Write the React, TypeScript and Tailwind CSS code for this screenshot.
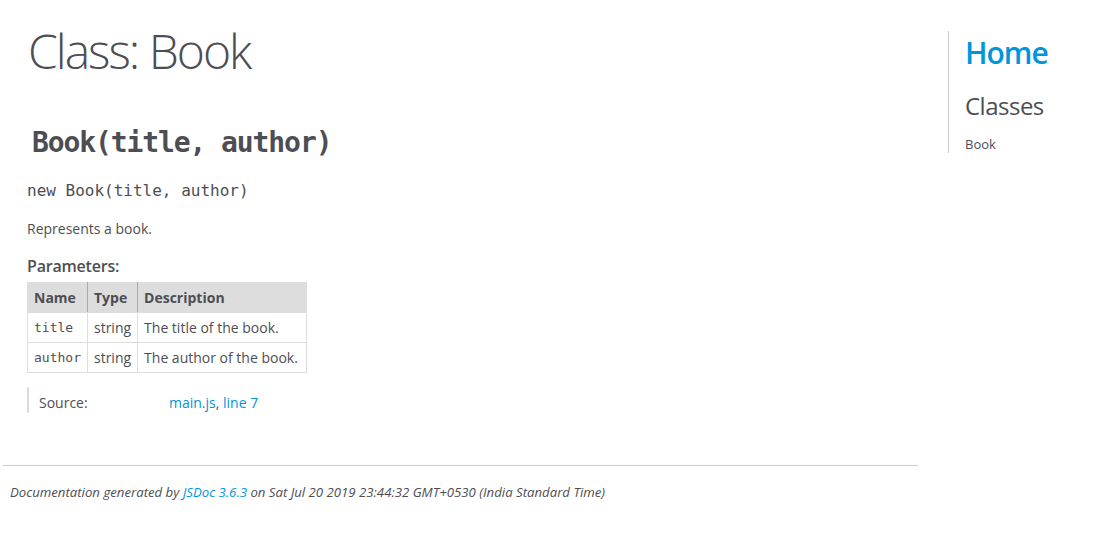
const mono = "font-['DejaVu_Sans_Mono',Consolas,monospace]";

const params = [
  { name: 'title', type: 'string', description: 'The title of the book.' },
  { name: 'author', type: 'string', description: 'The author of the book.' },
];

export default function App() {
  return (
    <div className="flex min-h-[534px] bg-white font-['Open_Sans',sans-serif] text-[14px] text-[#4d4e53]">
      {/* Main column */}
      <div className="w-[948px] shrink-0">
        <header className="px-[4px] pt-[19px]">
          <h1 className="mx-[24px] text-[48px] font-light leading-[64px] tracking-[-2px]">Class: Book</h1>
        </header>

        <section className="ml-[3px] mr-[30px] border-b border-[#ccc] px-[24px] pb-[52px]">
          <h2 className={`${mono} ml-[5px] mt-[44px] text-[28px] font-bold leading-[32px] tracking-[-1.1px]`}>
            Book(title, author)
          </h2>
          <h4 className={`${mono} mt-[22px] text-[16px] leading-[20px]`}>new Book(title, author)</h4>
          <p className="mt-[18px] leading-[20px]">Represents a book.</p>
          <h5 className="mt-[17px] text-[16px] font-semibold leading-[20px] tracking-[-0.2px]">Parameters:</h5>

          <table className="mt-[6px] border-collapse">
            <thead>
              <tr className="bg-[#ddd] font-semibold">
                <th className="border border-[#ddd] border-r-[#aaa] px-[6px] py-[4px] text-left leading-[21px]">Name</th>
                <th className="border border-[#ddd] border-r-[#aaa] px-[6px] py-[4px] text-left leading-[21px]">Type</th>
                <th className="border border-[#ddd] px-[6px] py-[4px] text-left leading-[21px]">Description</th>
              </tr>
            </thead>
            <tbody>
              {params.map((p) => (
                <tr key={p.name}>
                  <td className={`${mono} border border-[#ddd] px-[6px] py-[4px] text-[13px] leading-[21px]`}>{p.name}</td>
                  <td className="border border-[#ddd] px-[6px] py-[4px] leading-[21px]">{p.type}</td>
                  <td className="border border-[#ddd] px-[6px] py-[4px] pr-[8px] leading-[21px]">{p.description}</td>
                </tr>
              ))}
            </tbody>
          </table>

          <dl className="mt-[14px] flex border-l-2 border-[#ddd] pt-[6px]">
            <dt className="w-[140px] pl-[10px] leading-[20px]">Source:</dt>
            <dd className="leading-[20px]">
              <a className="text-[#0095dd]" href="#">main.js</a>, <a className="text-[#0095dd]" href="#">line 7</a>
            </dd>
          </dl>
        </section>

        <footer className="mt-[18px] pl-[10px] text-[13.2px] italic leading-[17px]">
          Documentation generated by <a className="text-[#0095dd]" href="#">JSDoc 3.6.3</a> on Sat Jul 20 2019 23:44:32 GMT+0530 (India Standard Time)
        </footer>
      </div>

      {/* Nav */}
      <nav className="mt-[31px] h-[122px] flex-1 border-l border-[#ccc] pl-[16px]">
        <h2 className="pt-[2px] text-[30px] font-semibold leading-[40px] tracking-[-1px] text-[#0095dd]">
          <a href="#">Home</a>
        </h2>
        <h3 className="mt-[18px] text-[24px] leading-[30px] tracking-[-0.5px]">Classes</h3>
        <ul className="mt-[15px] text-[13px] leading-[17px]">
          <li>
            <a href="#">Book</a>
          </li>
        </ul>
      </nav>
    </div>
  );
}
